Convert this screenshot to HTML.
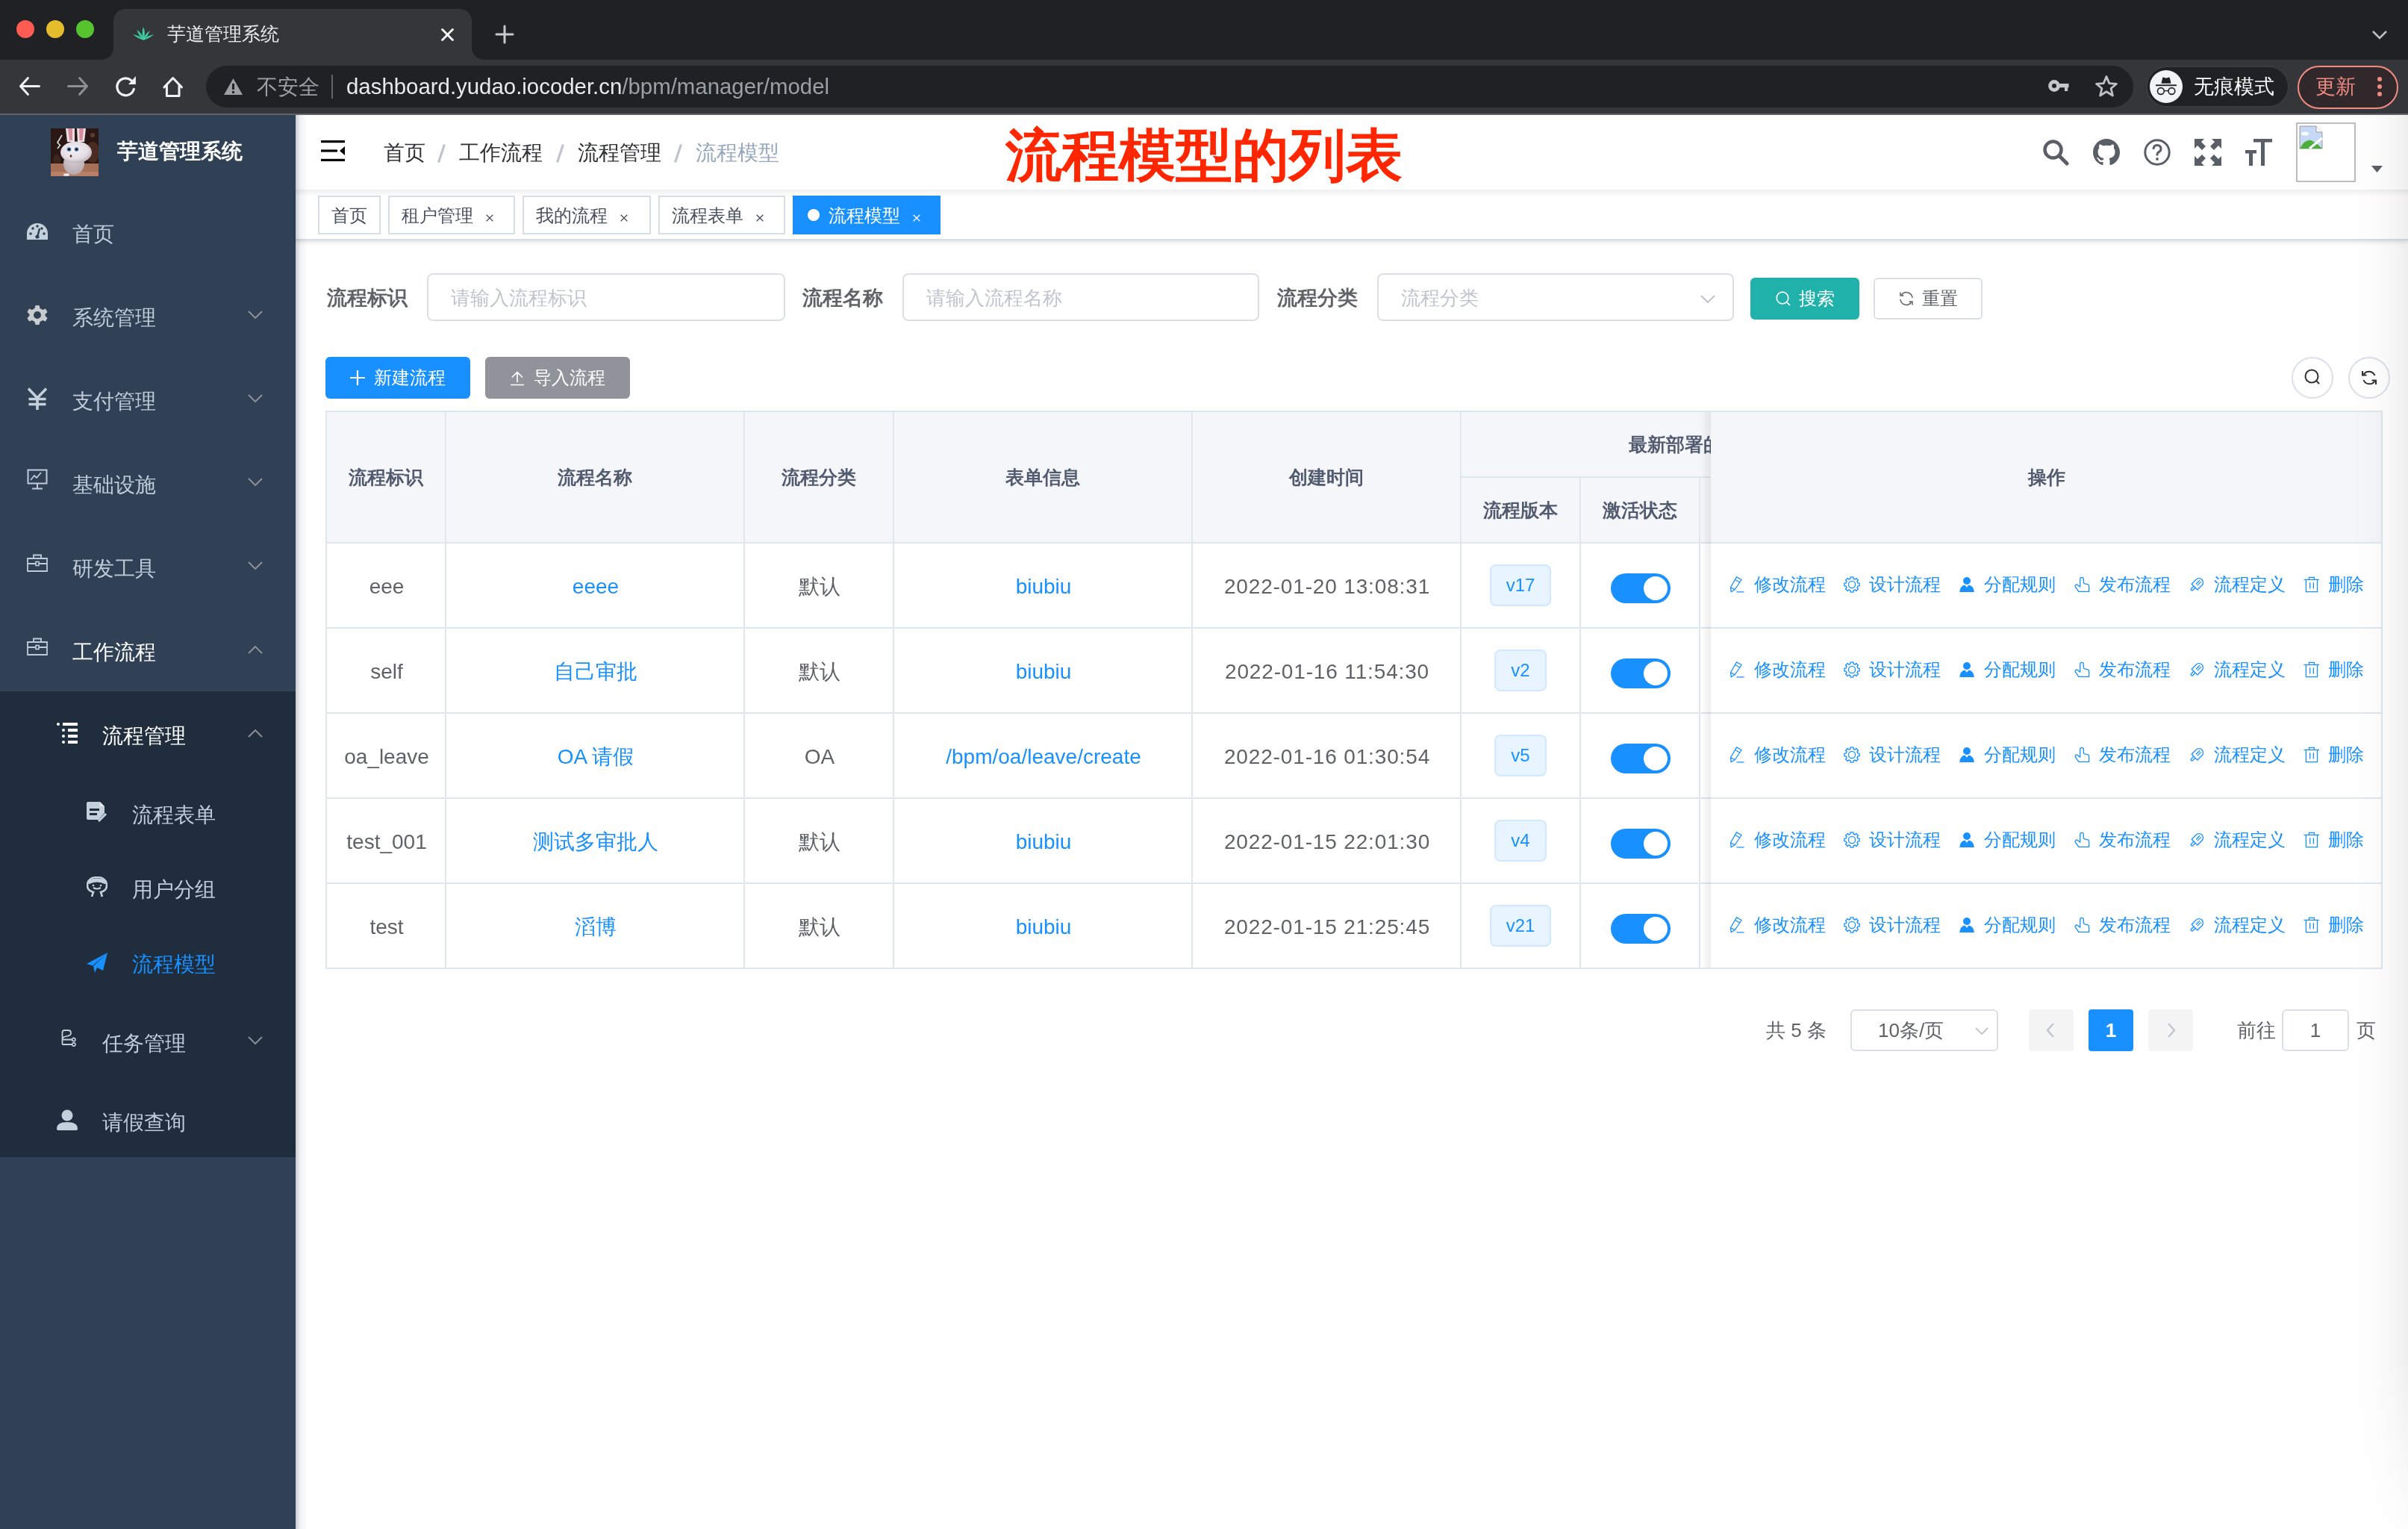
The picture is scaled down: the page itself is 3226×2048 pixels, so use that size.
<!DOCTYPE html>
<html><head><meta charset="utf-8">
<style>
*{box-sizing:border-box;margin:0;padding:0}
html,body{width:3226px;height:2048px;overflow:hidden;background:#fff;font-family:"Liberation Sans",sans-serif}
body{will-change:transform}
.a{position:absolute}
/* chrome */
#top{left:0;top:0;width:3226px;height:80px;background:#202124}
#toolbar{left:0;top:80px;width:3226px;height:72px;background:#35363a}
#tline{left:0;top:152px;width:3226px;height:2px;background:#5f6368}
.tl{width:24px;height:24px;border-radius:50%;top:27px}
#tab{left:152px;top:12px;width:480px;height:68px;background:#35363a;border-radius:16px 16px 0 0}
.flare{width:16px;height:16px;top:64px;background:#35363a}
.flare i{position:absolute;left:0;top:0;width:16px;height:16px;background:#202124}
#omni{left:276px;top:88px;width:2582px;height:56px;background:#202124;border-radius:28px}
.ctext{color:#e8eaed;font-size:24px;white-space:nowrap}
/* sidebar */
#side{left:0;top:154px;width:396px;height:1894px;background:#304156}
#subbg{left:0;top:926px;width:396px;height:624px;background:#1f2d3d}
.mi{left:0;width:396px;height:112px;line-height:112px;color:#bfcbd9;font-size:28px;white-space:nowrap}
.mi .t{position:absolute;left:97px;top:4px}
.mi .ic{position:absolute;left:36px;top:42px;width:28px;height:28px}
.mi .ar{position:absolute;left:332px;top:50px;width:20px;height:12px}
/* main */
#nav{left:396px;top:154px;width:2830px;height:100px;background:#fff}
#tags{left:396px;top:254px;width:2830px;height:68px;background:#fff;border-bottom:2px solid #d8dce5;box-shadow:0 2px 6px 0 rgba(0,0,0,.12),0 0 6px 0 rgba(0,0,0,.04)}
.tag{top:8px;height:52px;line-height:50px;border:2px solid #d8dce5;color:#495060;font-size:24px;padding:0 16px;background:#fff;white-space:nowrap}
.tag .x{display:inline-block;margin-left:6px;width:32px;text-align:center;line-height:0;vertical-align:0px}
.sep{color:#c0c4cc;margin:0 20.4px;font-weight:bold}
.bc{top:187px;font-size:28px;line-height:36px;white-space:nowrap;color:#303133}
.lbl{font-size:27px;line-height:40px;font-weight:bold;color:#606266;white-space:nowrap}
.inp{height:64px;border:2px solid #dcdfe6;border-radius:8px;background:#fff}
.ph{font-size:26px;line-height:40px;color:#c0c4cc;white-space:nowrap}
.btn{border-radius:6px;font-size:24px;white-space:nowrap;text-align:center}
.vl{width:2px;background:#dfe6ec}
.hl{height:2px;background:#dfe6ec}
.th{font-size:25px;font-weight:bold;color:#515a6e;white-space:nowrap;text-align:center;line-height:40px}
.td{font-size:28px;color:#606266;white-space:nowrap;text-align:center;line-height:40px}
.lk{color:#1890ff}
.vtag{width:82px;height:56px;border:2px solid #d1e9ff;background:#e8f4ff;border-radius:8px;color:#1890ff;font-size:24px;line-height:52px;text-align:center}
.sw{width:80px;height:40px;border-radius:20px;background:#1890ff}
.sw i{position:absolute;right:4px;top:4px;width:32px;height:32px;border-radius:50%;background:#fff}
.op{font-size:24px;color:#1890ff;white-space:nowrap;line-height:32px}
</style></head><body>
<!-- browser chrome -->
<div class="a" id="top"></div>
<div class="a" id="toolbar"></div>
<div class="a" id="tline"></div>
<div class="a tl" style="left:22px;background:#fe5b53"></div>
<div class="a tl" style="left:62px;background:#e5bd2c"></div>
<div class="a tl" style="left:102px;background:#56c42e"></div>
<div class="a flare" style="left:136px"><i style="border-radius:0 0 16px 0"></i></div>
<div class="a flare" style="left:632px"><i style="border-radius:0 0 0 16px"></i></div>
<div class="a" id="tab"></div>
<div class="a" id="omni"></div>
<!-- tab contents -->
<svg class="a" style="left:176px;top:34px" width="32" height="22" viewBox="0 0 32 22"><g fill="#40cfa0"><path d="M16.3 19.8Q13.2 10 15.8 2.2Q19.2 8 16.9 19.8Z"/><path d="M15.9 19.2Q9.8 14 7.4 6.1Q13 9.5 16.3 17.8Z"/><path d="M16.1 19.8Q8 17 1.9 12.2Q9.5 13 16.4 18.6Z"/><path d="M16.7 19.2Q22.2 14 24.9 7.2Q19 10.5 16.3 17.8Z"/><path d="M16.5 19.8Q24.5 17 30.4 12.2Q23 13 16.2 18.6Z"/></g></svg>
<div class="a ctext" style="left:224px;top:30px;font-size:24.5px;line-height:32px;color:#e8eaed">芋道管理系统</div>
<svg class="a" style="left:591px;top:38px" width="17" height="17" viewBox="0 0 17 17"><path d="M1.6 1.6L15.4 15.4M15.4 1.6L1.6 15.4" stroke="#fff" stroke-width="2.8" stroke-linecap="round"/></svg>
<svg class="a" style="left:663px;top:33px" width="26" height="26" viewBox="0 0 26 26"><path d="M13 2V24M2 13H24" stroke="#c6c9ce" stroke-width="3" stroke-linecap="round"/></svg>
<svg class="a" style="left:3177px;top:40px" width="22" height="14" viewBox="0 0 22 14"><path d="M2 2L11 11L20 2" fill="none" stroke="#bdc1c6" stroke-width="2.6"/></svg>
<!-- toolbar icons -->
<svg class="a" style="left:24px;top:101px" width="32" height="30" viewBox="0 0 32 30"><path d="M28.5 14.5H4.5M13.5 3.5L3.5 14.5L13.5 25.5" fill="none" stroke="#f1f3f4" stroke-width="3" stroke-linecap="round" stroke-linejoin="round"/></svg>
<svg class="a" style="left:88px;top:101px" width="32" height="30" viewBox="0 0 32 30"><path d="M3.5 14.5H27.5M18.5 3.5L28.5 14.5L18.5 25.5" fill="none" stroke="#8e9093" stroke-width="3" stroke-linecap="round" stroke-linejoin="round"/></svg>
<svg class="a" style="left:142px;top:99px" width="44" height="32" viewBox="0 0 44 32"><path d="M37.3 20.3A11.4 11.4 0 1 1 33.5 8.5" fill="none" stroke="#f1f3f4" stroke-width="3.2" stroke-linecap="round"/><path d="M30 13.9H39.9V3Z" fill="#f1f3f4"/></svg>
<svg class="a" style="left:216px;top:100px" width="32" height="32" viewBox="0 0 32 32"><path d="M4 16.8L15.7 4.5L27.4 16.8M7.4 13.5V28.4H24V13.5" fill="none" stroke="#f1f3f4" stroke-width="3" stroke-linecap="round" stroke-linejoin="round"/></svg>
<svg class="a" style="left:299px;top:104px" width="27" height="24" viewBox="0 0 27 24"><path d="M13.5 1L26 23H1Z" fill="#9aa0a6"/><rect x="12" y="8" width="3" height="8" fill="#202124"/><rect x="12" y="18" width="3" height="3" fill="#202124"/></svg>
<div class="a ctext" style="left:344px;top:98px;font-size:28px;line-height:38px;color:#9aa0a6">不安全</div>
<div class="a" style="left:444px;top:100px;width:2px;height:32px;background:#5f6368"></div>
<div class="a ctext" style="left:464px;top:97px;font-size:29.4px;line-height:38px;color:#e8eaed">dashboard.yudao.iocoder.cn<span style="color:#9aa0a6">/bpm/manager/model</span></div>
<svg class="a" style="left:2740px;top:104px" width="36" height="22" viewBox="0 0 36 22"><circle cx="12" cy="11" r="7.9" fill="#c4c6c9"/><rect x="12" y="8" width="19.5" height="5.2" fill="#c4c6c9"/><rect x="26" y="8" width="4.2" height="10" fill="#c4c6c9"/><circle cx="12" cy="11" r="3" fill="#202124"/></svg>
<svg class="a" style="left:2806px;top:100px" width="32" height="31" viewBox="0 0 32 31"><path d="M16 2.5L19.8 11.6L29.5 12.3L22.1 18.5L24.4 28L16 22.8L7.6 28L9.9 18.5L2.5 12.3L12.2 11.6Z" fill="none" stroke="#bdc1c6" stroke-width="2.8" stroke-linejoin="round"/></svg>
<div class="a" style="left:2875px;top:88px;width:192px;height:56px;border-radius:28px;background:#202124;border:2px solid #3a3b3f"></div>
<div class="a" style="left:2880px;top:94px;width:44px;height:44px;border-radius:50%;background:#f1f3f4"></div>
<svg class="a" style="left:2880px;top:94px" width="44" height="44" viewBox="0 0 44 44"><path d="M15.5 17.8L17.2 10.2Q17.5 9.4 18.3 9.6L20.5 10.2Q22 10.6 23.5 10.2L25.7 9.6Q26.5 9.4 26.8 10.2L28.5 17.8Z" fill="#202124"/><rect x="8" y="19.3" width="28" height="1.9" fill="#202124"/><circle cx="14.9" cy="28" r="4.4" fill="none" stroke="#202124" stroke-width="1.6"/><circle cx="29.4" cy="28" r="4.4" fill="none" stroke="#202124" stroke-width="1.6"/><path d="M19.3 27.6H25" stroke="#202124" stroke-width="1.4"/></svg>
<div class="a ctext" style="left:2939px;top:96px;font-size:27px;line-height:40px;color:#fff">无痕模式</div>
<div class="a" style="left:3078px;top:88px;width:135px;height:58px;border-radius:29px;background:#30282a;border:2px solid #f28b82"></div>
<div class="a ctext" style="left:3102px;top:96px;font-size:27px;line-height:40px;color:#f28b82">更新</div>
<div class="a" style="left:3185px;top:103px;width:6px;height:6px;border-radius:50%;background:#f28b82"></div>
<div class="a" style="left:3185px;top:113px;width:6px;height:6px;border-radius:50%;background:#f28b82"></div>
<div class="a" style="left:3185px;top:123px;width:6px;height:6px;border-radius:50%;background:#f28b82"></div>

<!-- sidebar -->
<div class="a" id="side"></div>
<div class="a" id="subbg"></div>
<!-- logo -->
<svg class="a" style="left:68px;top:172px;filter:blur(.4px)" width="64" height="64" viewBox="0 0 64 64">
<defs><radialGradient id="hd" cx="45%" cy="40%" r="60%"><stop offset="0" stop-color="#f4f1f5"/><stop offset=".7" stop-color="#e3dde3"/><stop offset="1" stop-color="#bdb2b8"/></radialGradient>
<radialGradient id="bd" cx="50%" cy="30%" r="70%"><stop offset="0" stop-color="#ddd2d8"/><stop offset="1" stop-color="#b5a9b0"/></radialGradient></defs>
<rect width="64" height="64" fill="#2b1814"/>
<ellipse cx="56" cy="32" rx="9" ry="14" fill="#4a2c22"/><ellipse cx="8" cy="42" rx="5" ry="7" fill="#3e261e"/><circle cx="56" cy="9" r="3" fill="#5a3c2e"/>
<rect y="47" width="64" height="17" fill="#a66f58"/><rect y="58" width="64" height="6" fill="#b88068"/>
<path d="M20 0H32V18H22Z" fill="#e8e0e4"/><path d="M23 0H29V16H25Z" fill="#d88c9c"/>
<path d="M35 0H47L45 18H36Z" fill="#e8e0e4"/><path d="M38 0H44L42.5 16H38.5Z" fill="#d88c9c"/>
<ellipse cx="31" cy="47" rx="14" ry="15" fill="url(#bd)"/>
<ellipse cx="34" cy="32" rx="21" ry="14.5" fill="url(#hd)"/>
<circle cx="24.5" cy="28" r="2.8" fill="#4a78b0"/><circle cx="24.5" cy="28" r="1.6" fill="#111"/>
<circle cx="34.5" cy="28" r="2.8" fill="#4a78b0"/><circle cx="34.5" cy="28" r="1.6" fill="#111"/>
<ellipse cx="27" cy="37" rx="1.4" ry="1.8" fill="#5a2a22"/>
<ellipse cx="21" cy="62" rx="4" ry="1.8" fill="#eee"/>
<path d="M15 9L9 19L12.5 22.5L9 27" fill="none" stroke="#e0e0e0" stroke-width="1.6"/></svg>
<div class="a" style="left:157px;top:185px;font-size:28px;line-height:36px;color:#fff;font-weight:bold;white-space:nowrap">芋道管理系统</div>
<!-- top level menu -->
<div class="a mi" style="top:254px"><svg class="ic" viewBox="0 0 28 28"><path d="M14 3A14 14 0 0 0 0 17V25H28V17A14 14 0 0 0 14 3Z" fill="#c4d0dc"/><circle cx="5" cy="17" r="1.8" fill="#304156"/><circle cx="8" cy="10" r="1.8" fill="#304156"/><circle cx="14" cy="7" r="1.8" fill="#304156"/><circle cx="20" cy="10" r="1.8" fill="#304156"/><circle cx="23" cy="17" r="1.8" fill="#304156"/><path d="M14 22L17 10" stroke="#304156" stroke-width="2.4"/><circle cx="14" cy="21" r="2.6" fill="#304156"/></svg><span class="t">首页</span></div>
<div class="a mi" style="top:366px"><svg class="ic" viewBox="0 0 28 28"><path d="M11.5 1H16.5L17.5 5L21 7L25 5.5L27.5 10L24.5 13V15L27.5 18L25 22.5L21 21L17.5 23L16.5 27H11.5L10.5 23L7 21L3 22.5L0.5 18L3.5 15V13L0.5 10L3 5.5L7 7L10.5 5Z" fill="#c8cccf"/><circle cx="14" cy="14" r="5" fill="#304156"/></svg><span class="t">系统管理</span><svg class="ar" viewBox="0 0 20 12"><path d="M1 1L10 10L19 1" fill="none" stroke="#909399" stroke-width="1.8"/></svg></div>
<div class="a mi" style="top:478px"><svg class="ic" viewBox="0 0 28 30" style="top:41px;height:30px"><path d="M2 1.5L14 14L26 1.5M14 14V30M2.5 15.5H25.5M2.5 22.5H25.5" fill="none" stroke="#c4d0dc" stroke-width="3.6"/></svg><span class="t">支付管理</span><svg class="ar" viewBox="0 0 20 12"><path d="M1 1L10 10L19 1" fill="none" stroke="#909399" stroke-width="1.8"/></svg></div>
<div class="a mi" style="top:590px"><svg class="ic" viewBox="0 0 28 28" style="top:38px"><path d="M1.5 1.5H26.5V19.5H1.5ZM14 19.5V26.5M7 26.5H21" fill="none" stroke="#bfcbd9" stroke-width="2"/><path d="M5 15L10 9L13 12L19 5" fill="none" stroke="#bfcbd9" stroke-width="1.8"/></svg><span class="t">基础设施</span><svg class="ar" viewBox="0 0 20 12"><path d="M1 1L10 10L19 1" fill="none" stroke="#909399" stroke-width="1.8"/></svg></div>
<div class="a mi" style="top:702px"><svg class="ic" viewBox="0 0 28 28" style="top:40px"><path d="M1 6H27V23H1ZM9 6V1.5H19V6M1 13H27" fill="none" stroke="#bfcbd9" stroke-width="1.8"/><rect x="12" y="10.5" width="4" height="5" fill="#304156" stroke="#bfcbd9" stroke-width="1.6"/></svg><span class="t">研发工具</span><svg class="ar" viewBox="0 0 20 12"><path d="M1 1L10 10L19 1" fill="none" stroke="#909399" stroke-width="1.8"/></svg></div>
<div class="a mi" style="top:814px;color:#fff"><svg class="ic" viewBox="0 0 28 28" style="top:40px"><path d="M1 6H27V23H1ZM9 6V1.5H19V6M1 13H27" fill="none" stroke="#bfcbd9" stroke-width="1.8"/><rect x="12" y="10.5" width="4" height="5" fill="#304156" stroke="#bfcbd9" stroke-width="1.6"/></svg><span class="t">工作流程</span><svg class="ar" viewBox="0 0 20 12"><path d="M1 11L10 2L19 11" fill="none" stroke="#909399" stroke-width="1.8"/></svg></div>
<!-- sub menu -->
<div class="a mi" style="top:926px;color:#fff"><svg class="ic" viewBox="0 0 28 28" style="left:76px;top:42px"><circle cx="2" cy="2" r="2" fill="#fff"/><rect x="8" y="0" width="20" height="4" fill="#fff"/><circle cx="9" cy="10" r="2" fill="#fff"/><rect x="15" y="8" width="13" height="4" fill="#fff"/><circle cx="9" cy="18" r="2" fill="#fff"/><rect x="15" y="16" width="13" height="4" fill="#fff"/><circle cx="9" cy="26" r="2" fill="#fff"/><rect x="15" y="24" width="13" height="4" fill="#fff"/></svg><span class="t" style="left:137px">流程管理</span><svg class="ar" viewBox="0 0 20 12"><path d="M1 11L10 2L19 11" fill="none" stroke="#909399" stroke-width="1.8"/></svg></div>
<div class="a mi" style="top:1038px;height:100px;line-height:100px"><svg class="ic" viewBox="0 0 28 28" style="left:116px;top:36px"><path d="M2 0H18L24 6V15L16 24H2Q0 24 0 22V2Q0 0 2 0Z" fill="#c4d0dc"/><rect x="4" y="9" width="13" height="3" fill="#1f2d3d"/><rect x="4" y="15" width="10" height="3" fill="#1f2d3d"/><path d="M18 0V6H24" fill="#fff" opacity=".5"/><path d="M16 26L26 16" stroke="#c4d0dc" stroke-width="3"/></svg><span class="t" style="left:177px">流程表单</span></div>
<div class="a mi" style="top:1138px;height:100px;line-height:100px"><svg class="ic" viewBox="0 0 28 28" style="left:116px;top:36px"><path d="M14 1C6 1 1 5 1 12C1 17 5 20 9 21L7 27M14 1C22 1 27 5 27 12C27 17 23 20 19 21L21 27" fill="none" stroke="#c4d0dc" stroke-width="2.6"/><path d="M2 8Q14 2 26 8" fill="none" stroke="#c4d0dc" stroke-width="5"/><path d="M9 15Q14 18 19 15" fill="none" stroke="#c4d0dc" stroke-width="2.2"/><circle cx="9" cy="12" r="1.3" fill="#c4d0dc"/><circle cx="19" cy="12" r="1.3" fill="#c4d0dc"/></svg><span class="t" style="left:177px">用户分组</span></div>
<div class="a mi" style="top:1238px;height:100px;line-height:100px;color:#1890ff"><svg class="ic" viewBox="0 0 28 28" style="left:116px;top:38px"><path d="M28 0L0 15L8 17.5ZM28 0L9 18L11 27L14 20L22 24Z" fill="#1890ff"/></svg><span class="t" style="left:177px">流程模型</span></div>
<div class="a mi" style="top:1338px"><svg class="ic" viewBox="0 0 28 28" style="left:80px;top:40px"><path d="M3.5 21V5Q3.5 2 6.5 2H11Q15 2 15 5.5Q15 9 11 9.5L7 10.5Q3.5 11.5 3.5 14M3.5 14.5H16.5M3.5 21H16.5" fill="none" stroke="#c4d0dc" stroke-width="1.8" stroke-linejoin="round"/><circle cx="18.8" cy="14.5" r="2.1" fill="#1f2d3d" stroke="#c4d0dc" stroke-width="1.6"/><circle cx="18.8" cy="21" r="2.1" fill="#1f2d3d" stroke="#c4d0dc" stroke-width="1.6"/></svg><span class="t" style="left:137px">任务管理</span><svg class="ar" viewBox="0 0 20 12"><path d="M1 1L10 10L19 1" fill="none" stroke="#909399" stroke-width="1.8"/></svg></div>
<div class="a mi" style="top:1450px;height:100px;line-height:100px"><svg class="ic" viewBox="0 0 28 28" style="left:76px;top:36px"><circle cx="14" cy="8" r="7.5" fill="#c4d0dc"/><path d="M0 26Q0 17 14 17Q28 17 28 26Q28 28 26 28H2Q0 28 0 26Z" fill="#c4d0dc"/></svg><span class="t" style="left:137px">请假查询</span></div>

<!-- navbar -->
<div class="a" id="tags"></div>
<div class="a" id="nav"></div>
<div class="a" style="left:396px;top:254px;width:2830px;height:9px;background:linear-gradient(180deg,rgba(0,21,41,.07),rgba(0,21,41,0))"></div>
<!-- navbar content -->
<svg class="a" style="left:430px;top:188px" width="32" height="28" viewBox="0 0 32 28"><rect x="0" y="0" width="32" height="3.2" fill="#000"/><rect x="0" y="12.4" width="22" height="3.2" fill="#000"/><rect x="0" y="24.8" width="32" height="3.2" fill="#000"/><path d="M32 8L25 14L32 20Z" fill="#000"/></svg>
<div class="a bc" style="left:514px">首页</div>
<svg class="a" style="left:586px;top:193px" width="11" height="25" viewBox="0 0 11 25"><path d="M9.5 0.5L1.5 24.5" stroke="#c0c4cc" stroke-width="3.2"/></svg>
<div class="a bc" style="left:615px">工作流程</div>
<svg class="a" style="left:745px;top:193px" width="11" height="25" viewBox="0 0 11 25"><path d="M9.5 0.5L1.5 24.5" stroke="#c0c4cc" stroke-width="3.2"/></svg>
<div class="a bc" style="left:774px">流程管理</div>
<svg class="a" style="left:903px;top:193px" width="11" height="25" viewBox="0 0 11 25"><path d="M9.5 0.5L1.5 24.5" stroke="#c0c4cc" stroke-width="3.2"/></svg>
<div class="a bc" style="left:932px;color:#97a8be">流程模型</div>
<div class="a" style="left:1347px;top:158px;font-size:75.8px;line-height:100px;white-space:nowrap;color:#ff2600;font-weight:600">流程模型的列表</div>
<!-- right menu -->
<svg class="a" style="left:2736px;top:186px" width="36" height="36" viewBox="0 0 36 36"><circle cx="14.5" cy="14.5" r="11" fill="none" stroke="#5a5e66" stroke-width="4.5"/><path d="M23 23L33 33" stroke="#5a5e66" stroke-width="5" stroke-linecap="round"/></svg>
<svg class="a" style="left:2804px;top:186px" width="36" height="36" viewBox="0 0 16 16"><path fill="#5a5e66" d="M8 0C3.58 0 0 3.58 0 8c0 3.54 2.29 6.53 5.47 7.59.4.07.55-.17.55-.38 0-.19-.01-.82-.01-1.49-2.01.37-2.53-.49-2.69-.94-.09-.23-.48-.94-.82-1.13-.28-.15-.68-.52-.01-.53.63-.01 1.08.58 1.23.82.72 1.21 1.87.87 2.33.66.07-.52.28-.87.51-1.07-1.78-.2-3.64-.89-3.640-3.95 0-.87.31-1.59.82-2.15-.08-.2-.36-1.02.08-2.12 0 0 .67-.21 2.2.82.64-.18 1.32-.27 2-.27.68 0 1.36.09 2 .27 1.53-1.04 2.2-.82 2.2-.82.44 1.1.16 1.92.08 2.12.51.56.82 1.27.82 2.15 0 3.07-1.87 3.750-3.65 3.95.29.25.54.73.54 1.48 0 1.07-.01 1.93-.01 2.2 0 .21.15.46.55.38A8.013 8.013 0 0016 8c0-4.42-3.58-8-8-8z"/></svg>
<svg class="a" style="left:2872px;top:186px" width="36" height="36" viewBox="0 0 36 36"><circle cx="18" cy="18" r="16.2" fill="none" stroke="#5a5e66" stroke-width="3"/><path d="M13 14Q13 8.5 18 8.5Q23 8.5 23 13.5Q23 16.5 19.5 18Q18 18.7 18 21V22.5" fill="none" stroke="#5a5e66" stroke-width="3"/><circle cx="18" cy="27" r="1.9" fill="#5a5e66"/></svg>
<svg class="a" style="left:2940px;top:186px" width="36" height="36" viewBox="0 0 36 36"><g fill="#5a5e66"><path d="M0 0H13L9 4L15 10L10 15L4 9L0 13Z"/><path d="M36 0V13L32 9L26 15L21 10L27 4L23 0Z"/><path d="M0 36V23L4 27L10 21L15 26L9 32L13 36Z"/><path d="M36 36H23L27 32L21 26L26 21L32 27L36 23Z"/></g></svg>
<svg class="a" style="left:3008px;top:186px" width="36" height="36" viewBox="0 0 36 36"><g fill="#5a5e66"><rect x="11" y="0" width="25" height="4.5"/><rect x="21" y="0" width="5" height="36"/><rect x="0" y="15" width="15" height="4.5"/><rect x="5" y="15" width="5" height="21"/></g></svg>
<div class="a" style="left:3076px;top:164px;width:80px;height:80px;border:2px solid #bcbcbc;background:#fff"></div>
<svg class="a" style="left:3080px;top:168px" width="32" height="32" viewBox="0 0 32 32"><path d="M1 1H23L31 9V31H1Z" fill="#c6d9f6" stroke="#9a9a9a" stroke-width="1"/><path d="M23 1V9H31" fill="#fff" stroke="#9a9a9a" stroke-width="1"/><path d="M1 31Q8 18 16 20Q22 22 31 31Z" fill="#4caf3c"/><ellipse cx="8" cy="11" rx="5" ry="2.5" fill="#fff"/><path d="M14 31L31 17" stroke="#fff" stroke-width="3"/></svg>
<svg class="a" style="left:3177px;top:222px" width="15" height="9" viewBox="0 0 15 9"><path d="M0 0H15L7.5 9Z" fill="#5a5e66"/></svg>
<!-- tags -->
<div class="a tag" style="left:426px;top:262px;width:84px;padding:0;text-align:center">首页</div>
<div class="a tag" style="left:520px;top:262px;width:170px">租户管理<span class="x"><svg width="10" height="10" viewBox="0 0 10 10"><path d="M.7 .7L9.3 9.3M9.3 .7L.7 9.3" stroke="currentColor" stroke-width="1.3"/></svg></span></div>
<div class="a tag" style="left:700px;top:262px;width:172px">我的流程<span class="x"><svg width="10" height="10" viewBox="0 0 10 10"><path d="M.7 .7L9.3 9.3M9.3 .7L.7 9.3" stroke="currentColor" stroke-width="1.3"/></svg></span></div>
<div class="a tag" style="left:882px;top:262px;width:170px">流程表单<span class="x"><svg width="10" height="10" viewBox="0 0 10 10"><path d="M.7 .7L9.3 9.3M9.3 .7L.7 9.3" stroke="currentColor" stroke-width="1.3"/></svg></span></div>
<div class="a tag" style="left:1062px;top:262px;width:198px;background:#1890ff;border-color:#1890ff;color:#fff;padding-left:18px"><span style="display:inline-block;width:16px;height:16px;border-radius:50%;background:#fff;margin-right:12px;vertical-align:1px"></span>流程模型<span class="x"><svg width="10" height="10" viewBox="0 0 10 10"><path d="M.7 .7L9.3 9.3M9.3 .7L.7 9.3" stroke="currentColor" stroke-width="1.3"/></svg></span></div>

<!-- ===== main content ===== -->
<div class="a lbl" style="left:438px;top:379px">流程标识</div>
<div class="a inp" style="left:572px;top:366px;width:480px"></div>
<div class="a ph" style="left:604px;top:379px">请输入流程标识</div>
<div class="a lbl" style="left:1075px;top:379px">流程名称</div>
<div class="a inp" style="left:1209px;top:366px;width:478px"></div>
<div class="a ph" style="left:1241px;top:379px">请输入流程名称</div>
<div class="a lbl" style="left:1711px;top:379px">流程分类</div>
<div class="a inp" style="left:1845px;top:366px;width:478px"></div>
<div class="a ph" style="left:1877px;top:379px">流程分类</div>
<svg class="a" style="left:2278px;top:395px" width="20" height="12" viewBox="0 0 20 12"><path d="M1 1L10 10L19 1" fill="none" stroke="#c0c4cc" stroke-width="2"/></svg>
<div class="a btn" style="left:2345px;top:372px;width:146px;height:56px;background:#20b2aa;color:#fff;line-height:56px"><svg width="22" height="22" viewBox="0 0 22 22" style="vertical-align:-3px;margin-right:10px"><circle cx="10" cy="10" r="7.8" fill="none" stroke="#fff" stroke-width="1.7"/><path d="M15.8 15.8L20 20" stroke="#fff" stroke-width="1.7"/></svg>搜索</div>
<div class="a btn" style="left:2510px;top:372px;width:146px;height:56px;background:#fff;border:2px solid #dcdfe6;color:#606266;line-height:52px"><svg width="22" height="22" viewBox="0 0 22 22" style="vertical-align:-3px;margin-right:10px"><path d="M19 10A8 8 0 0 0 4.5 6M3 12A8 8 0 0 0 17.5 16" fill="none" stroke="#606266" stroke-width="1.5"/><path d="M3 2.5V7H7.5M19 19.5V15H14.5" fill="none" stroke="#606266" stroke-width="1.5"/></svg>重置</div>

<div class="a btn" style="left:436px;top:478px;width:194px;height:56px;background:#1890ff;color:#fff;line-height:56px"><svg width="20" height="20" viewBox="0 0 20 20" style="vertical-align:-2px;margin-right:12px"><path d="M10 0V20M0 10H20" stroke="#fff" stroke-width="2.2"/></svg>新建流程</div>
<div class="a btn" style="left:650px;top:478px;width:194px;height:56px;background:#909399;color:#fff;line-height:56px"><svg width="20" height="20" viewBox="0 0 20 20" style="vertical-align:-3px;margin-right:12px"><path d="M10 2V15M3 8.5L10 1.5L17 8.5M1 18.5H19" fill="none" stroke="#fff" stroke-width="1.6"/></svg>导入流程</div>
<div class="a" style="left:3070px;top:478px;width:56px;height:56px;border-radius:50%;border:2px solid #dcdfe6"></div>
<svg class="a" style="left:3087px;top:494px" width="22" height="22" viewBox="0 0 22 22"><circle cx="10" cy="10" r="8.5" fill="none" stroke="#303133" stroke-width="2"/><path d="M16 16L20 20" stroke="#303133" stroke-width="2"/></svg>
<div class="a" style="left:3146px;top:478px;width:56px;height:56px;border-radius:50%;border:2px solid #dcdfe6"></div>
<svg class="a" style="left:3163px;top:495px" width="22" height="22" viewBox="0 0 22 22"><path d="M18.5 8A8.5 8.5 0 0 0 3.5 6.5M3.5 14A8.5 8.5 0 0 0 18.5 15.5" fill="none" stroke="#303133" stroke-width="2"/><path d="M2 2V7.5H7.5M20 20V14.5H14.5" fill="none" stroke="#303133" stroke-width="2"/></svg>

<!-- table -->
<div class="a" style="left:436px;top:550px;width:2756px;height:177px;background:#f4f6f9"></div>
<div class="a hl" style="left:436px;top:550px;width:2756px"></div>
<div class="a hl" style="left:1956px;top:638px;width:336px"></div>
<div class="a hl" style="left:436px;top:726px;width:2756px"></div>
<div class="a hl" style="left:436px;top:840px;width:2756px"></div>
<div class="a hl" style="left:436px;top:954px;width:2756px"></div>
<div class="a hl" style="left:436px;top:1068px;width:2756px"></div>
<div class="a hl" style="left:436px;top:1182px;width:2756px"></div>
<div class="a hl" style="left:436px;top:1296px;width:2756px"></div>
<div class="a vl" style="left:436px;top:550px;height:748px"></div>
<div class="a vl" style="left:596px;top:550px;height:748px"></div>
<div class="a vl" style="left:996px;top:550px;height:748px"></div>
<div class="a vl" style="left:1196px;top:550px;height:748px"></div>
<div class="a vl" style="left:1596px;top:550px;height:748px"></div>
<div class="a vl" style="left:1956px;top:550px;height:748px"></div>
<div class="a vl" style="left:2116px;top:638px;height:660px"></div>
<div class="a vl" style="left:2276px;top:638px;height:660px"></div>
<div class="a vl" style="left:3190px;top:550px;height:748px"></div>
<!-- header texts -->
<div class="a th" style="left:437px;top:619px;width:160px">流程标识</div>
<div class="a th" style="left:597px;top:619px;width:400px">流程名称</div>
<div class="a th" style="left:997px;top:619px;width:200px">流程分类</div>
<div class="a th" style="left:1197px;top:619px;width:400px">表单信息</div>
<div class="a th" style="left:1597px;top:619px;width:360px">创建时间</div>
<div class="a th" style="left:2182px;top:575px;width:300px;text-align:left">最新部署的流程定义</div>
<div class="a th" style="left:1957px;top:663px;width:160px">流程版本</div>
<div class="a th" style="left:2117px;top:663px;width:160px">激活状态</div>
<div class="a td" style="left:438px;top:766px;width:160px">eee</div>
<div class="a td lk" style="left:598px;top:766px;width:400px">eeee</div>
<div class="a td" style="left:998px;top:766px;width:200px">默认</div>
<div class="a td lk" style="left:1198px;top:766px;width:400px">biubiu</div>
<div class="a td" style="left:1598px;top:766px;width:360px;letter-spacing:.85px">2022-01-20 13:08:31</div>
<div class="a vtag" style="left:1996px;top:756px;width:82px">v17</div>
<div class="a sw" style="left:2158px;top:768px"><i></i></div>
<div class="a td" style="left:438px;top:880px;width:160px">self</div>
<div class="a td lk" style="left:598px;top:880px;width:400px">自己审批</div>
<div class="a td" style="left:998px;top:880px;width:200px">默认</div>
<div class="a td lk" style="left:1198px;top:880px;width:400px">biubiu</div>
<div class="a td" style="left:1598px;top:880px;width:360px;letter-spacing:.85px">2022-01-16 11:54:30</div>
<div class="a vtag" style="left:2002px;top:870px;width:70px">v2</div>
<div class="a sw" style="left:2158px;top:882px"><i></i></div>
<div class="a td" style="left:438px;top:994px;width:160px">oa_leave</div>
<div class="a td lk" style="left:598px;top:994px;width:400px">OA 请假</div>
<div class="a td" style="left:998px;top:994px;width:200px">OA</div>
<div class="a td lk" style="left:1198px;top:994px;width:400px">/bpm/oa/leave/create</div>
<div class="a td" style="left:1598px;top:994px;width:360px;letter-spacing:.85px">2022-01-16 01:30:54</div>
<div class="a vtag" style="left:2002px;top:984px;width:70px">v5</div>
<div class="a sw" style="left:2158px;top:996px"><i></i></div>
<div class="a td" style="left:438px;top:1108px;width:160px">test_001</div>
<div class="a td lk" style="left:598px;top:1108px;width:400px">测试多审批人</div>
<div class="a td" style="left:998px;top:1108px;width:200px">默认</div>
<div class="a td lk" style="left:1198px;top:1108px;width:400px">biubiu</div>
<div class="a td" style="left:1598px;top:1108px;width:360px;letter-spacing:.85px">2022-01-15 22:01:30</div>
<div class="a vtag" style="left:2002px;top:1098px;width:70px">v4</div>
<div class="a sw" style="left:2158px;top:1110px"><i></i></div>
<div class="a td" style="left:438px;top:1222px;width:160px">test</div>
<div class="a td lk" style="left:598px;top:1222px;width:400px">滔博</div>
<div class="a td" style="left:998px;top:1222px;width:200px">默认</div>
<div class="a td lk" style="left:1198px;top:1222px;width:400px">biubiu</div>
<div class="a td" style="left:1598px;top:1222px;width:360px;letter-spacing:.85px">2022-01-15 21:25:45</div>
<div class="a vtag" style="left:1996px;top:1212px;width:82px">v21</div>
<div class="a sw" style="left:2158px;top:1224px"><i></i></div>

<!-- fixed right column -->
<div class="a" style="left:2278px;top:552px;width:14px;height:744px;background:linear-gradient(90deg,rgba(0,0,0,0),rgba(0,0,0,.07))"></div>
<div class="a" style="left:2292px;top:550px;width:900px;height:748px;background:#fff"></div>
<div class="a" style="left:2292px;top:550px;width:900px;height:177px;background:#f4f6f9"></div>
<div class="a hl" style="left:2292px;top:550px;width:900px"></div>
<div class="a hl" style="left:2292px;top:726px;width:900px"></div>
<div class="a hl" style="left:2292px;top:840px;width:900px"></div>
<div class="a hl" style="left:2292px;top:954px;width:900px"></div>
<div class="a hl" style="left:2292px;top:1068px;width:900px"></div>
<div class="a hl" style="left:2292px;top:1182px;width:900px"></div>
<div class="a hl" style="left:2292px;top:1296px;width:900px"></div>
<div class="a vl" style="left:3190px;top:550px;height:748px"></div>
<div class="a th" style="left:2293px;top:619px;width:898px">操作</div>
<svg class="a" style="left:2316px;top:772px" width="24" height="24" viewBox="0 0 24 24"><path d="M10.5 0.9L17.1 4.5L8.4 17.5L3.2 20.8L2.5 14.8Z M9.1 4.8L14.4 7.8 M2.5 14.8L8.4 17.5 M10.5 20.8H20.6" fill="none" stroke="#1890ff" stroke-width="1.3" stroke-linejoin="round"/></svg><div class="a op" style="left:2350px;top:767px">修改流程</div>
<svg class="a" style="left:2470px;top:772px" width="24" height="24" viewBox="0 0 24 24"><path d="M9.04 3.14 L9.03 0.89 L12.97 0.89 L12.96 3.14 L15.17 4.06 L16.76 2.46 L19.54 5.24 L17.94 6.83 L18.86 9.04 L21.11 9.03 L21.11 12.97 L18.86 12.96 L17.94 15.17 L19.54 16.76 L16.76 19.54 L15.17 17.94 L12.96 18.86 L12.97 21.11 L9.03 21.11 L9.04 18.86 L6.83 17.94 L5.24 19.54 L2.46 16.76 L4.06 15.17 L3.14 12.96 L0.89 12.97 L0.89 9.03 L3.14 9.04 L4.06 6.83 L2.46 5.24 L5.24 2.46 L6.83 4.06Z" fill="none" stroke="#1890ff" stroke-width="1.3" stroke-linejoin="round"/><circle cx="11" cy="11" r="4.6" fill="none" stroke="#1890ff" stroke-width="1.3"/></svg><div class="a op" style="left:2504px;top:767px">设计流程</div>
<svg class="a" style="left:2624px;top:772px" width="24" height="24" viewBox="0 0 24 24"><circle cx="11" cy="6" r="5" fill="#1890ff"/><path d="M1.2 21Q1.8 13 8.4 11.6L11 14.8L13.4 11.6Q20.2 13 20.9 21Z" fill="#1890ff"/></svg><div class="a op" style="left:2658px;top:767px">分配规则</div>
<svg class="a" style="left:2778px;top:772px" width="24" height="24" viewBox="0 0 24 24"><path d="M8.7 14.2V3.7A2.3 2.3 0 0 1 13.3 3.7V8.2Q13.5 9.6 15 9.9L18.6 10.7Q20.6 11.2 20.6 13.2V20.4H6.8L2.3 13.8Q1.7 12.4 2.9 11.4Q4.1 10.6 5.4 11.5Z" fill="none" stroke="#1890ff" stroke-width="1.3" stroke-linejoin="round"/></svg><div class="a op" style="left:2812px;top:767px">发布流程</div>
<svg class="a" style="left:2932px;top:772px" width="26" height="24" viewBox="0 0 26 24"><g transform="rotate(45 12.6 9.6)"><path d="M7.1 16V7.6A5.5 5.5 0 0 1 18.1 7.6V16Z" fill="none" stroke="#1890ff" stroke-width="1.3" stroke-linejoin="round"/><path d="M11.1 16V20.8A1.5 1.5 0 0 0 14.1 20.8V16" fill="none" stroke="#1890ff" stroke-width="1.3"/><path d="M11.3 5.5V11.5M13.9 5.5V11.5" stroke="#1890ff" stroke-width="1.3" stroke-linecap="round"/></g></svg><div class="a op" style="left:2966px;top:767px">流程定义</div>
<svg class="a" style="left:3084px;top:772px" width="24" height="24" viewBox="0 0 24 24"><path d="M2.6 4.3H22.9M9.5 4.3V1.3H16.4V4.3M5.4 4.3V20.7H20.5V4.3M10.7 8.3V16.5M15.4 8.3V16.5" fill="none" stroke="#1890ff" stroke-width="1.3"/></svg><div class="a op" style="left:3119px;top:767px">删除</div>
<svg class="a" style="left:2316px;top:886px" width="24" height="24" viewBox="0 0 24 24"><path d="M10.5 0.9L17.1 4.5L8.4 17.5L3.2 20.8L2.5 14.8Z M9.1 4.8L14.4 7.8 M2.5 14.8L8.4 17.5 M10.5 20.8H20.6" fill="none" stroke="#1890ff" stroke-width="1.3" stroke-linejoin="round"/></svg><div class="a op" style="left:2350px;top:881px">修改流程</div>
<svg class="a" style="left:2470px;top:886px" width="24" height="24" viewBox="0 0 24 24"><path d="M9.04 3.14 L9.03 0.89 L12.97 0.89 L12.96 3.14 L15.17 4.06 L16.76 2.46 L19.54 5.24 L17.94 6.83 L18.86 9.04 L21.11 9.03 L21.11 12.97 L18.86 12.96 L17.94 15.17 L19.54 16.76 L16.76 19.54 L15.17 17.94 L12.96 18.86 L12.97 21.11 L9.03 21.11 L9.04 18.86 L6.83 17.94 L5.24 19.54 L2.46 16.76 L4.06 15.17 L3.14 12.96 L0.89 12.97 L0.89 9.03 L3.14 9.04 L4.06 6.83 L2.46 5.24 L5.24 2.46 L6.83 4.06Z" fill="none" stroke="#1890ff" stroke-width="1.3" stroke-linejoin="round"/><circle cx="11" cy="11" r="4.6" fill="none" stroke="#1890ff" stroke-width="1.3"/></svg><div class="a op" style="left:2504px;top:881px">设计流程</div>
<svg class="a" style="left:2624px;top:886px" width="24" height="24" viewBox="0 0 24 24"><circle cx="11" cy="6" r="5" fill="#1890ff"/><path d="M1.2 21Q1.8 13 8.4 11.6L11 14.8L13.4 11.6Q20.2 13 20.9 21Z" fill="#1890ff"/></svg><div class="a op" style="left:2658px;top:881px">分配规则</div>
<svg class="a" style="left:2778px;top:886px" width="24" height="24" viewBox="0 0 24 24"><path d="M8.7 14.2V3.7A2.3 2.3 0 0 1 13.3 3.7V8.2Q13.5 9.6 15 9.9L18.6 10.7Q20.6 11.2 20.6 13.2V20.4H6.8L2.3 13.8Q1.7 12.4 2.9 11.4Q4.1 10.6 5.4 11.5Z" fill="none" stroke="#1890ff" stroke-width="1.3" stroke-linejoin="round"/></svg><div class="a op" style="left:2812px;top:881px">发布流程</div>
<svg class="a" style="left:2932px;top:886px" width="26" height="24" viewBox="0 0 26 24"><g transform="rotate(45 12.6 9.6)"><path d="M7.1 16V7.6A5.5 5.5 0 0 1 18.1 7.6V16Z" fill="none" stroke="#1890ff" stroke-width="1.3" stroke-linejoin="round"/><path d="M11.1 16V20.8A1.5 1.5 0 0 0 14.1 20.8V16" fill="none" stroke="#1890ff" stroke-width="1.3"/><path d="M11.3 5.5V11.5M13.9 5.5V11.5" stroke="#1890ff" stroke-width="1.3" stroke-linecap="round"/></g></svg><div class="a op" style="left:2966px;top:881px">流程定义</div>
<svg class="a" style="left:3084px;top:886px" width="24" height="24" viewBox="0 0 24 24"><path d="M2.6 4.3H22.9M9.5 4.3V1.3H16.4V4.3M5.4 4.3V20.7H20.5V4.3M10.7 8.3V16.5M15.4 8.3V16.5" fill="none" stroke="#1890ff" stroke-width="1.3"/></svg><div class="a op" style="left:3119px;top:881px">删除</div>
<svg class="a" style="left:2316px;top:1000px" width="24" height="24" viewBox="0 0 24 24"><path d="M10.5 0.9L17.1 4.5L8.4 17.5L3.2 20.8L2.5 14.8Z M9.1 4.8L14.4 7.8 M2.5 14.8L8.4 17.5 M10.5 20.8H20.6" fill="none" stroke="#1890ff" stroke-width="1.3" stroke-linejoin="round"/></svg><div class="a op" style="left:2350px;top:995px">修改流程</div>
<svg class="a" style="left:2470px;top:1000px" width="24" height="24" viewBox="0 0 24 24"><path d="M9.04 3.14 L9.03 0.89 L12.97 0.89 L12.96 3.14 L15.17 4.06 L16.76 2.46 L19.54 5.24 L17.94 6.83 L18.86 9.04 L21.11 9.03 L21.11 12.97 L18.86 12.96 L17.94 15.17 L19.54 16.76 L16.76 19.54 L15.17 17.94 L12.96 18.86 L12.97 21.11 L9.03 21.11 L9.04 18.86 L6.83 17.94 L5.24 19.54 L2.46 16.76 L4.06 15.17 L3.14 12.96 L0.89 12.97 L0.89 9.03 L3.14 9.04 L4.06 6.83 L2.46 5.24 L5.24 2.46 L6.83 4.06Z" fill="none" stroke="#1890ff" stroke-width="1.3" stroke-linejoin="round"/><circle cx="11" cy="11" r="4.6" fill="none" stroke="#1890ff" stroke-width="1.3"/></svg><div class="a op" style="left:2504px;top:995px">设计流程</div>
<svg class="a" style="left:2624px;top:1000px" width="24" height="24" viewBox="0 0 24 24"><circle cx="11" cy="6" r="5" fill="#1890ff"/><path d="M1.2 21Q1.8 13 8.4 11.6L11 14.8L13.4 11.6Q20.2 13 20.9 21Z" fill="#1890ff"/></svg><div class="a op" style="left:2658px;top:995px">分配规则</div>
<svg class="a" style="left:2778px;top:1000px" width="24" height="24" viewBox="0 0 24 24"><path d="M8.7 14.2V3.7A2.3 2.3 0 0 1 13.3 3.7V8.2Q13.5 9.6 15 9.9L18.6 10.7Q20.6 11.2 20.6 13.2V20.4H6.8L2.3 13.8Q1.7 12.4 2.9 11.4Q4.1 10.6 5.4 11.5Z" fill="none" stroke="#1890ff" stroke-width="1.3" stroke-linejoin="round"/></svg><div class="a op" style="left:2812px;top:995px">发布流程</div>
<svg class="a" style="left:2932px;top:1000px" width="26" height="24" viewBox="0 0 26 24"><g transform="rotate(45 12.6 9.6)"><path d="M7.1 16V7.6A5.5 5.5 0 0 1 18.1 7.6V16Z" fill="none" stroke="#1890ff" stroke-width="1.3" stroke-linejoin="round"/><path d="M11.1 16V20.8A1.5 1.5 0 0 0 14.1 20.8V16" fill="none" stroke="#1890ff" stroke-width="1.3"/><path d="M11.3 5.5V11.5M13.9 5.5V11.5" stroke="#1890ff" stroke-width="1.3" stroke-linecap="round"/></g></svg><div class="a op" style="left:2966px;top:995px">流程定义</div>
<svg class="a" style="left:3084px;top:1000px" width="24" height="24" viewBox="0 0 24 24"><path d="M2.6 4.3H22.9M9.5 4.3V1.3H16.4V4.3M5.4 4.3V20.7H20.5V4.3M10.7 8.3V16.5M15.4 8.3V16.5" fill="none" stroke="#1890ff" stroke-width="1.3"/></svg><div class="a op" style="left:3119px;top:995px">删除</div>
<svg class="a" style="left:2316px;top:1114px" width="24" height="24" viewBox="0 0 24 24"><path d="M10.5 0.9L17.1 4.5L8.4 17.5L3.2 20.8L2.5 14.8Z M9.1 4.8L14.4 7.8 M2.5 14.8L8.4 17.5 M10.5 20.8H20.6" fill="none" stroke="#1890ff" stroke-width="1.3" stroke-linejoin="round"/></svg><div class="a op" style="left:2350px;top:1109px">修改流程</div>
<svg class="a" style="left:2470px;top:1114px" width="24" height="24" viewBox="0 0 24 24"><path d="M9.04 3.14 L9.03 0.89 L12.97 0.89 L12.96 3.14 L15.17 4.06 L16.76 2.46 L19.54 5.24 L17.94 6.83 L18.86 9.04 L21.11 9.03 L21.11 12.97 L18.86 12.96 L17.94 15.17 L19.54 16.76 L16.76 19.54 L15.17 17.94 L12.96 18.86 L12.97 21.11 L9.03 21.11 L9.04 18.86 L6.83 17.94 L5.24 19.54 L2.46 16.76 L4.06 15.17 L3.14 12.96 L0.89 12.97 L0.89 9.03 L3.14 9.04 L4.06 6.83 L2.46 5.24 L5.24 2.46 L6.83 4.06Z" fill="none" stroke="#1890ff" stroke-width="1.3" stroke-linejoin="round"/><circle cx="11" cy="11" r="4.6" fill="none" stroke="#1890ff" stroke-width="1.3"/></svg><div class="a op" style="left:2504px;top:1109px">设计流程</div>
<svg class="a" style="left:2624px;top:1114px" width="24" height="24" viewBox="0 0 24 24"><circle cx="11" cy="6" r="5" fill="#1890ff"/><path d="M1.2 21Q1.8 13 8.4 11.6L11 14.8L13.4 11.6Q20.2 13 20.9 21Z" fill="#1890ff"/></svg><div class="a op" style="left:2658px;top:1109px">分配规则</div>
<svg class="a" style="left:2778px;top:1114px" width="24" height="24" viewBox="0 0 24 24"><path d="M8.7 14.2V3.7A2.3 2.3 0 0 1 13.3 3.7V8.2Q13.5 9.6 15 9.9L18.6 10.7Q20.6 11.2 20.6 13.2V20.4H6.8L2.3 13.8Q1.7 12.4 2.9 11.4Q4.1 10.6 5.4 11.5Z" fill="none" stroke="#1890ff" stroke-width="1.3" stroke-linejoin="round"/></svg><div class="a op" style="left:2812px;top:1109px">发布流程</div>
<svg class="a" style="left:2932px;top:1114px" width="26" height="24" viewBox="0 0 26 24"><g transform="rotate(45 12.6 9.6)"><path d="M7.1 16V7.6A5.5 5.5 0 0 1 18.1 7.6V16Z" fill="none" stroke="#1890ff" stroke-width="1.3" stroke-linejoin="round"/><path d="M11.1 16V20.8A1.5 1.5 0 0 0 14.1 20.8V16" fill="none" stroke="#1890ff" stroke-width="1.3"/><path d="M11.3 5.5V11.5M13.9 5.5V11.5" stroke="#1890ff" stroke-width="1.3" stroke-linecap="round"/></g></svg><div class="a op" style="left:2966px;top:1109px">流程定义</div>
<svg class="a" style="left:3084px;top:1114px" width="24" height="24" viewBox="0 0 24 24"><path d="M2.6 4.3H22.9M9.5 4.3V1.3H16.4V4.3M5.4 4.3V20.7H20.5V4.3M10.7 8.3V16.5M15.4 8.3V16.5" fill="none" stroke="#1890ff" stroke-width="1.3"/></svg><div class="a op" style="left:3119px;top:1109px">删除</div>
<svg class="a" style="left:2316px;top:1228px" width="24" height="24" viewBox="0 0 24 24"><path d="M10.5 0.9L17.1 4.5L8.4 17.5L3.2 20.8L2.5 14.8Z M9.1 4.8L14.4 7.8 M2.5 14.8L8.4 17.5 M10.5 20.8H20.6" fill="none" stroke="#1890ff" stroke-width="1.3" stroke-linejoin="round"/></svg><div class="a op" style="left:2350px;top:1223px">修改流程</div>
<svg class="a" style="left:2470px;top:1228px" width="24" height="24" viewBox="0 0 24 24"><path d="M9.04 3.14 L9.03 0.89 L12.97 0.89 L12.96 3.14 L15.17 4.06 L16.76 2.46 L19.54 5.24 L17.94 6.83 L18.86 9.04 L21.11 9.03 L21.11 12.97 L18.86 12.96 L17.94 15.17 L19.54 16.76 L16.76 19.54 L15.17 17.94 L12.96 18.86 L12.97 21.11 L9.03 21.11 L9.04 18.86 L6.83 17.94 L5.24 19.54 L2.46 16.76 L4.06 15.17 L3.14 12.96 L0.89 12.97 L0.89 9.03 L3.14 9.04 L4.06 6.83 L2.46 5.24 L5.24 2.46 L6.83 4.06Z" fill="none" stroke="#1890ff" stroke-width="1.3" stroke-linejoin="round"/><circle cx="11" cy="11" r="4.6" fill="none" stroke="#1890ff" stroke-width="1.3"/></svg><div class="a op" style="left:2504px;top:1223px">设计流程</div>
<svg class="a" style="left:2624px;top:1228px" width="24" height="24" viewBox="0 0 24 24"><circle cx="11" cy="6" r="5" fill="#1890ff"/><path d="M1.2 21Q1.8 13 8.4 11.6L11 14.8L13.4 11.6Q20.2 13 20.9 21Z" fill="#1890ff"/></svg><div class="a op" style="left:2658px;top:1223px">分配规则</div>
<svg class="a" style="left:2778px;top:1228px" width="24" height="24" viewBox="0 0 24 24"><path d="M8.7 14.2V3.7A2.3 2.3 0 0 1 13.3 3.7V8.2Q13.5 9.6 15 9.9L18.6 10.7Q20.6 11.2 20.6 13.2V20.4H6.8L2.3 13.8Q1.7 12.4 2.9 11.4Q4.1 10.6 5.4 11.5Z" fill="none" stroke="#1890ff" stroke-width="1.3" stroke-linejoin="round"/></svg><div class="a op" style="left:2812px;top:1223px">发布流程</div>
<svg class="a" style="left:2932px;top:1228px" width="26" height="24" viewBox="0 0 26 24"><g transform="rotate(45 12.6 9.6)"><path d="M7.1 16V7.6A5.5 5.5 0 0 1 18.1 7.6V16Z" fill="none" stroke="#1890ff" stroke-width="1.3" stroke-linejoin="round"/><path d="M11.1 16V20.8A1.5 1.5 0 0 0 14.1 20.8V16" fill="none" stroke="#1890ff" stroke-width="1.3"/><path d="M11.3 5.5V11.5M13.9 5.5V11.5" stroke="#1890ff" stroke-width="1.3" stroke-linecap="round"/></g></svg><div class="a op" style="left:2966px;top:1223px">流程定义</div>
<svg class="a" style="left:3084px;top:1228px" width="24" height="24" viewBox="0 0 24 24"><path d="M2.6 4.3H22.9M9.5 4.3V1.3H16.4V4.3M5.4 4.3V20.7H20.5V4.3M10.7 8.3V16.5M15.4 8.3V16.5" fill="none" stroke="#1890ff" stroke-width="1.3"/></svg><div class="a op" style="left:3119px;top:1223px">删除</div>
<!-- pagination -->
<div class="a td" style="left:2366px;top:1360px;text-align:left;color:#606266;font-size:26px">共 5 条</div>
<div class="a inp" style="left:2479px;top:1352px;width:198px;height:56px;border-radius:6px"></div>
<div class="a td" style="left:2516px;top:1360px;text-align:left;font-size:26px">10条/页</div>
<svg class="a" style="left:2646px;top:1376px" width="18" height="10" viewBox="0 0 18 10"><path d="M1 1L9 9L17 1" fill="none" stroke="#c0c4cc" stroke-width="1.8"/></svg>
<div class="a" style="left:2718px;top:1352px;width:60px;height:56px;background:#f4f4f5;border-radius:4px"></div>
<svg class="a" style="left:2741px;top:1370px" width="12" height="20" viewBox="0 0 12 20"><path d="M10 1L2 10L10 19" fill="none" stroke="#c0c4cc" stroke-width="2.4"/></svg>
<div class="a" style="left:2798px;top:1352px;width:60px;height:56px;background:#1890ff;border-radius:4px;color:#fff;font-size:26px;font-weight:bold;line-height:56px;text-align:center">1</div>
<div class="a" style="left:2878px;top:1352px;width:60px;height:56px;background:#f4f4f5;border-radius:4px"></div>
<svg class="a" style="left:2903px;top:1370px" width="12" height="20" viewBox="0 0 12 20"><path d="M2 1L10 10L2 19" fill="none" stroke="#c0c4cc" stroke-width="2.4"/></svg>
<div class="a td" style="left:2997px;top:1360px;text-align:left;font-size:26px">前往</div>
<div class="a inp" style="left:3057px;top:1352px;width:90px;height:56px;border-radius:6px"></div>
<div class="a td" style="left:3057px;top:1360px;width:90px;font-size:26px">1</div>
<div class="a td" style="left:3157px;top:1360px;text-align:left;font-size:26px">页</div>
<!-- sidebar shadow -->
<div class="a" style="left:396px;top:154px;width:16px;height:1894px;background:linear-gradient(90deg,rgba(0,21,41,.22),rgba(0,21,41,.06) 40%,rgba(0,21,41,0))"></div>
<!-- right edge shade -->
<div class="a" style="left:3150px;top:154px;width:76px;height:1894px;background:linear-gradient(90deg,rgba(0,0,0,0),rgba(0,0,0,.012) 40%,rgba(0,0,0,.035) 75%,rgba(0,0,0,.065));-webkit-mask-image:linear-gradient(180deg,#000 88%,rgba(0,0,0,.15) 100%)"></div>
</body></html>
